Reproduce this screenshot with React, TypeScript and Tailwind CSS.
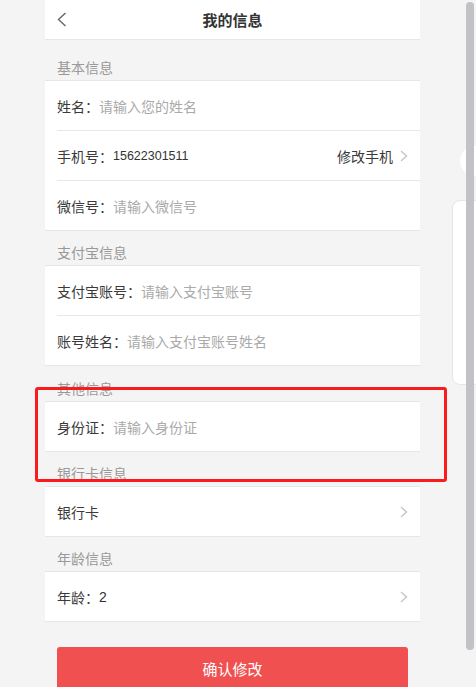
import React from "react";

const font = { fontFamily: '"Noto Sans CJK SC", "Noto Sans", sans-serif' };

function Chevron() {
  return (
    <svg width="8" height="12" viewBox="0 0 8 12" className="shrink-0">
      <polyline points="1,1 6.5,6 1,11" fill="none" stroke="#c8c8c8" strokeWidth="1.5" />
    </svg>
  );
}

function Row({
  label,
  placeholder,
  value,
  right,
  chevron,
  last,
}: {
  label: string;
  placeholder?: string;
  value?: React.ReactNode;
  right?: string;
  chevron?: boolean;
  last?: boolean;
}) {
  return (
    <div
      className={
        last
          ? "ml-3 pr-3 h-[49px] flex items-center"
          : "ml-3 pr-3 h-[50px] flex items-center border-b border-[#e8e8e8]"
      }
    >
      <span className="text-[14px] text-[#3a3a3a] leading-[20px]">{label}</span>
      {placeholder && <span className="text-[14px] text-[#aaaaaa] leading-[20px]">{placeholder}</span>}
      {value}
      <div className="flex-1" />
      {right && <span className="text-[14px] text-[#3a3a3a] leading-[20px] mr-[7px]">{right}</span>}
      {chevron && <Chevron />}
    </div>
  );
}

function Section({ title, h }: { title: string; h: string }) {
  return (
    <div className={`${h} flex items-end pb-[3px] pl-3`}>
      <span className="text-[14px] text-[#999999] leading-[20px]">{title}</span>
    </div>
  );
}

function Block({ children }: { children: React.ReactNode }) {
  return <div className="bg-white border-y border-[#e6e6e6]">{children}</div>;
}

export default function App() {
  return (
    <div className="relative w-[476px] h-[687px] overflow-hidden bg-[#f4f4f4]" style={font}>
      <div className="ml-[45px] w-[375px]">
        <div className="h-[40px] bg-white border-b border-[#e6e6e6] relative flex items-center justify-center">
          <svg width="10" height="15" viewBox="0 0 10 15" className="absolute left-[12px] top-[12px]">
            <polyline points="8.5,1 1.5,7.5 8.5,14" fill="none" stroke="#666666" strokeWidth="1.4" />
          </svg>
          <span className="text-[15px] font-bold text-[#333333] leading-[20px]">我的信息</span>
        </div>

        <Section title="基本信息" h="h-[40px]" />
        <Block>
          <Row label="姓名：" placeholder="请输入您的姓名" />
          <Row
            label="手机号："
            value={
              <span
                className="text-[12.5px] text-[#333333] leading-[20px] font-medium"
                style={{ fontFamily: '"Liberation Sans", Arial, sans-serif' }}
              >
                15622301511
              </span>
            }
            right="修改手机"
            chevron
          />
          <Row label="微信号：" placeholder="请输入微信号" last />
        </Block>

        <Section title="支付宝信息" h="h-[34px]" />
        <Block>
          <Row label="支付宝账号：" placeholder="请输入支付宝账号" />
          <Row label="账号姓名：" placeholder="请输入支付宝账号姓名" last />
        </Block>

        <Section title="其他信息" h="h-[35px]" />
        <Block>
          <Row label="身份证：" placeholder="请输入身份证" last />
        </Block>

        <Section title="银行卡信息" h="h-[34px]" />
        <Block>
          <Row label="银行卡" chevron last />
        </Block>

        <Section title="年龄信息" h="h-[34px]" />
        <Block>
          <Row
            label="年龄："
            value={
              <span
                className="text-[14px] text-[#333333] leading-[20px]"
                style={{ fontFamily: '"Liberation Sans", Arial, sans-serif' }}
              >
                2
              </span>
            }
            chevron
            last
          />
        </Block>

        <div className="pt-[25px] pl-3">
          <button className="w-[351px] h-[44px] rounded-[3px] bg-[#f05050] text-white text-[15px] leading-[20px]">
            确认修改
          </button>
        </div>
      </div>

      {/* annotation box */}
      <div className="absolute left-[35px] top-[387px] w-[412px] h-[95px] border-[3px] border-[#fa1c1c] rounded-[3px]" />

      {/* right-side background decorations */}
      <div className="absolute left-[460px] top-[146px] w-[30px] h-[30px] rounded-full bg-white" />
      <div className="absolute left-[452px] top-[200px] w-[30px] h-[185px] rounded-[8px] bg-white border border-[#e6e6e6]" />

      {/* scrollbar */}
      <div className="absolute left-[466px] top-[2px] w-[8px] h-[648px] rounded-full bg-[#c1c1c6]" />
    </div>
  );
}
